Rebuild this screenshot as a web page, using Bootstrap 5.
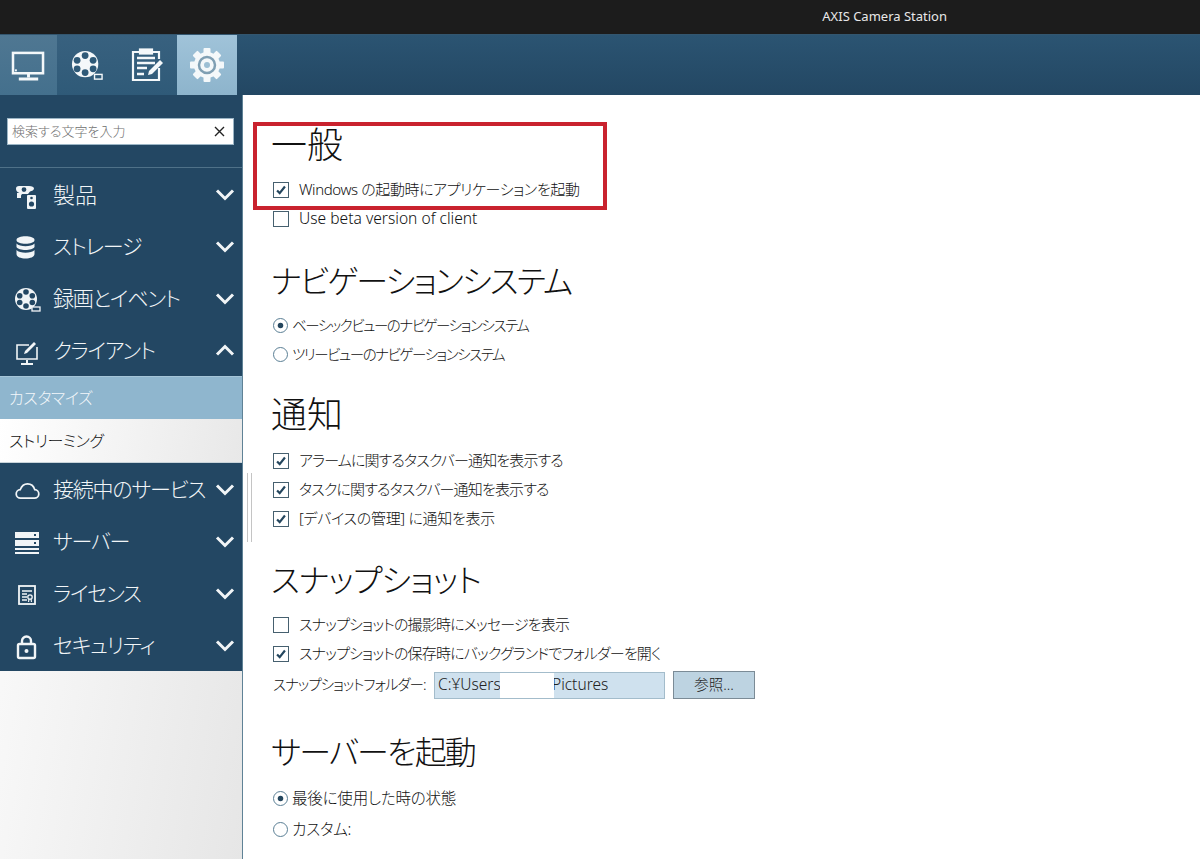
<!DOCTYPE html>
<html lang="ja">
<head>
    <meta charset="UTF-8">
    <meta name="viewport" content="width=device-width, initial-scale=1.0">
    <title>AXIS Camera Station</title>
    <link href="https://cdn.jsdelivr.net/npm/bootstrap@5.3.0/dist/css/bootstrap.min.css" rel="stylesheet">
    <script src="https://cdn.jsdelivr.net/npm/bootstrap@5.3.0/dist/js/bootstrap.bundle.min.js"></script>
    <style>
        html, body { height: 100%; }
        body {
            background: #fff;
            color: #111;
            font-family: "Noto Sans", "Noto Sans CJK JP", sans-serif;
            font-feature-settings: "palt";
            overflow: hidden;
        }
        /* title bar */
        .title-bar { height: 34px; background: #1c1c1c; color: #e8e8e8; font-size: 13px; padding-right: 253px; }
        /* tool bar */
        .tool-bar { height: 61px; background: linear-gradient(#2b5472, #234763); border-top: 1px solid #33566f; }
        .tool-tab { width: 60px; }
        .tool-tab.home { width: 57px; background: linear-gradient(#4f7792, #44708d); }
        .tool-tab.dim { background: linear-gradient(#38617f, #2f5a78); }
        .tool-tab.active { background: linear-gradient(#a0c3d9, #8db4cc); }
        /* sidebar */
        .app-body { height: 764px; }
        .side { width: 243px; background: linear-gradient(100deg, #fff, #e6e6e6); border-right: 1px solid #5f8296; }
        .search-box { height: 73px; background: #234763; padding: 23px 8px 0 7px; border-bottom: 1px solid #4f7188; }
        .search-box .inner { height: 27px; background: #fff; border: 1px solid #9cb6c6; padding: 0 8px 0 4px; font-size: 13px; font-weight: 300; color: #6e6e6e; }
        .search-box svg { width: 11px; height: 11px; }
        .menu-item { height: 52px; background: #234763; color: #f1f5f7; font-size: 21px; font-weight: 300; letter-spacing: -1.2px; }
        .menu-item.kanji { font-size: 22px; letter-spacing: 0; }
        .menu-item .ico { width: 53px; padding-left: 15px; flex: none; }
        .menu-item .lbl { line-height: 1; white-space: nowrap; }
        .menu-item .chev { width: 20px; height: 13px; margin: 0 7px 0 auto; flex: none; }
        .sub-item { height: 43px; font-size: 16px; padding-left: 9px; font-weight: 300; letter-spacing: -.4px; }
        .sub-item.on { background: #8fb6ce; color: #f3f7fa; border-top: 1px solid #a5c5d8; height: 43px; }
        .sub-item.off { height: 44px; background: linear-gradient(100deg, #fff, #e8e8e8); color: #111; border-bottom: 1px solid #c9d4da; }
        /* splitter */
        .splitter { width: 5px; height: 69px; margin: 378px 0 0 4px; border-left: 1px solid #c4c4c4; border-right: 1px solid #c4c4c4; flex: none; }
        /* main form */
        .content { padding: 30px 0 0 19px; position: relative; }
        .content h2 { font-size: 32px; line-height: 40px; font-weight: 300; letter-spacing: -1.8px; margin: 0 0 10px; }
        .content h2.kanji { font-size: 36px; letter-spacing: 0; }
        .content section { margin-bottom: 28px; }
        .content section.sec-nav { margin-bottom: 26px; }
        .content section.sec-notify { margin-bottom: 27px; }
        .content section.sec-notify h2 { margin-bottom: 11px; }
        .content section.sec-snap { margin-bottom: 33px; }
        .content section.sec-snap h2 { letter-spacing: -.9px; }
        .content section.sec-server h2 { margin-bottom: 12px; }
        .opt { height: 29px; font-size: 15px; font-weight: 300; letter-spacing: -.85px; margin: 0; padding: 0; min-height: 0; white-space: nowrap; }
        .opt.first { letter-spacing: -.4px; }
        .opt.wide { letter-spacing: -.3px; }
        .opt.tight { font-size: 14.5px; letter-spacing: -1.45px; }
        .opt.plain { font-size: 15.5px; letter-spacing: -.2px; }
        .opt.latin { font-size: 15.6px; letter-spacing: 0; }
        .opt.gap-after { margin-bottom: 2px; }
        .opt .form-check-input { margin: 0 10px 0 2px; float: none; flex: none; width: 16px; height: 16px; border: 1px solid #46606f; border-radius: 0; box-shadow: none; }
        .opt .form-check-input[type=checkbox]:checked {
            background-color: #fff; border-color: #46606f;
            background-image: url("data:image/svg+xml,%3csvg xmlns='http://www.w3.org/2000/svg' viewBox='0 0 16 16'%3e%3cpath fill='none' stroke='%2324465e' stroke-width='2.5' d='M3.5 8.5l3 3 6-7.500'/%3e%3c/svg%3e");
            background-size: 100% 100%;
        }
        .opt .form-check-input[type=radio] { border-radius: 50%; width: 15px; height: 15px; margin-right: 4px; border-color: #5b7f95; opacity: 1; }
        .opt .form-check-input[type=radio]:checked {
            background-color: #fff; border-color: #5b7f95;
            background-image: url("data:image/svg+xml,%3csvg xmlns='http://www.w3.org/2000/svg' viewBox='0 0 16 16'%3e%3ccircle cx='8' cy='8' r='3.4' fill='%2324465e'/%3e%3c/svg%3e");
            background-size: 100% 100%;
        }
        .folder-row { height: 28px; margin-top: 3px; font-size: 14.5px; font-weight: 300; }
        .folder-label { width: 163px; padding-left: 2px; white-space: nowrap; letter-spacing: -1px; }
        .folder-input { width: 231px; height: 27px; background: #cfe1ee; border: 1px solid #a3bccb; padding: 0 0 1px 3px; font-size: 15.5px; color: #222; position: relative; }
        .folder-mask { position: absolute; left: 65px; top: 0; width: 54px; height: 25px; background: #fff; }
        .folder-text { width: 62px; overflow: hidden; white-space: nowrap; display: inline-block; }
        .folder-rest { margin-left: 52px; }
        .btn-browse { width: 82px; height: 28px; margin-left: 8px; padding: 0; font-size: 14.5px; font-weight: 300; color: #222; background: #bdd3e1; border: 1px solid #7b8b96; border-radius: 0; }
        /* red highlight drawn over the screenshot */
        .red-mark { position: absolute; left: 1px; top: 27px; width: 354px; height: 88px; border: 4px solid #c9222e; pointer-events: none; }
    </style>
</head>
<body>
    <div class="title-bar d-flex align-items-center justify-content-end">AXIS Camera Station</div>

    <div class="tool-bar d-flex">
        <div class="tool-tab home d-flex align-items-center justify-content-center">
            <svg width="35" height="31" viewBox="0 0 36 32" fill="none" stroke="#f4f8fa" stroke-width="2.6"><rect x="2" y="3" width="31" height="21"/><path d="M18 24v4M8 30h20" stroke-width="3"/><rect x="4" y="20" width="2" height="2" fill="#f4f8fa" stroke="none"/></svg>
        </div>
        <div class="tool-tab dim d-flex align-items-center justify-content-center">
            <svg width="32" height="32" viewBox="0 0 34 34"><circle cx="15" cy="16" r="14" fill="#f4f8fa"/><g fill="#2f5a78"><circle cx="15" cy="7" r="3.6"/><circle cx="15" cy="25" r="3.6"/><circle cx="6.5" cy="12" r="3.6"/><circle cx="23.5" cy="12" r="3.6"/><circle cx="6.5" cy="21" r="3.6"/><circle cx="23.5" cy="21" r="3.6"/></g><rect x="25" y="27" width="8" height="5" fill="#2f5a78" stroke="#f4f8fa" stroke-width="1.5"/></svg>
        </div>
        <div class="tool-tab dim d-flex align-items-center justify-content-center">
            <svg width="32" height="34" viewBox="0 0 32 34" fill="none" stroke="#f4f8fa" stroke-width="2.2"><path d="M9 4H2v28h26V20M21 4h7v7"/><rect x="9" y="1.5" width="12" height="4" fill="#f4f8fa"/><path d="M6 10h18M6 15h18M6 20h10M6 26h7" stroke-width="2.4"/><path d="M17 27l1-4 11-11 3 3-11 11z" fill="#f4f8fa" stroke="none"/></svg>
        </div>
        <div class="tool-tab active d-flex align-items-center justify-content-center">
            <svg width="36" height="36" viewBox="0 0 36 36">
                <g fill="#f4f8fa">
                    <rect x="14.500" y="1" width="7" height="34" rx="1"/>
                    <rect x="14.500" y="1" width="7" height="34" rx="1" transform="rotate(45 18 18)"/>
                    <rect x="14.500" y="1" width="7" height="34" rx="1" transform="rotate(90 18 18)"/>
                    <rect x="14.500" y="1" width="7" height="34" rx="1" transform="rotate(135 18 18)"/>
                    <circle cx="18" cy="18" r="13"/>
                </g>
                <circle cx="18" cy="18" r="8" fill="none" stroke="#7f9fb3" stroke-width="2.500"/>
                <circle cx="18" cy="18" r="5.500" fill="#f4f8fa"/>
                <circle cx="18" cy="18" r="3" fill="#9dbfd4"/>
            </svg>
        </div>
    </div>

    <div class="app-body d-flex">
        <aside class="side flex-shrink-0">
            <div class="search-box">
                <div class="inner d-flex align-items-center justify-content-between">
                    <span>検索する文字を入力</span>
                    <svg viewBox="0 0 11 11" stroke="#222" stroke-width="1.400"><path d="M1 1l9 9M10 1l-9 9"/></svg>
                </div>
            </div>

            <div class="menu-item kanji d-flex align-items-center">
                <div class="ico"><svg width="22" height="24" viewBox="0 0 22 24"><path fill="#f1f5f7" fill-rule="evenodd" d="M4 1h10c3 0 5 1 5 2.500S17 6 15 6.500L13 9H7L6 10.500V13H2V8h2.500C2 7 1 5.500 1 3.500 1 2 2 1 4 1zM9 2.200a2.400 2.400 0 1 0 0 4.800 2.400 2.400 0 0 0 0-4.800z"/><rect x="12" y="10" width="9" height="14" rx="1" fill="#f1f5f7"/><circle cx="16.500" cy="19" r="2.600" fill="#234763"/><circle cx="16.500" cy="13" r="1.300" fill="#234763"/></svg></div>
                <span class="lbl">製品</span>
                <svg class="chev" viewBox="0 0 20 13" fill="none" stroke="#f1f5f7" stroke-width="3"><path d="M2 2.500l8 8 8-8"/></svg>
            </div>
            <div class="menu-item d-flex align-items-center">
                <div class="ico"><svg width="21" height="25" viewBox="3 0 18 25" fill="#f1f5f7"><path d="M3 5c0-5 18-5 18 0s-18 5-18 0z"/><path d="M3 8.500c3 3.500 15 3.500 18 0V12c-2 4-16 4-18 0z"/><path d="M3 15c3 3.500 15 3.500 18 0v4c0 6-18 6-18 0z"/></svg></div>
                <span class="lbl">ストレージ</span>
                <svg class="chev" viewBox="0 0 20 13" fill="none" stroke="#f1f5f7" stroke-width="3"><path d="M2 2.500l8 8 8-8"/></svg>
            </div>
            <div class="menu-item d-flex align-items-center">
                <div class="ico"><svg width="26" height="26" viewBox="0 0 26 26"><circle cx="11" cy="12" r="11" fill="#f1f5f7"/><g fill="#234763"><circle cx="11" cy="5" r="2.800"/><circle cx="11" cy="19" r="2.800"/><circle cx="4.700" cy="8.700" r="2.800"/><circle cx="17.300" cy="8.700" r="2.800"/><circle cx="4.700" cy="15.500" r="2.800"/><circle cx="17.300" cy="15.500" r="2.800"/></g><rect x="17" y="20" width="8" height="4" fill="#234763" stroke="#f1f5f7" stroke-width="1.300"/></svg></div>
                <span class="lbl">録画とイベント</span>
                <svg class="chev" viewBox="0 0 20 13" fill="none" stroke="#f1f5f7" stroke-width="3"><path d="M2 2.500l8 8 8-8"/></svg>
            </div>
            <div class="menu-item d-flex align-items-center">
                <div class="ico"><svg width="24" height="26" viewBox="0 0 24 26" fill="none" stroke="#f1f5f7" stroke-width="1.600"><path d="M14 6H2v14h20V8"/><path d="M12 21v3M6 25h12" stroke-width="2"/><path d="M9 15l1-3 9-9 2 2-9 9z" fill="#f1f5f7" stroke="none"/></svg></div>
                <span class="lbl">クライアント</span>
                <svg class="chev" viewBox="0 0 20 13" fill="none" stroke="#f1f5f7" stroke-width="3"><path d="M2 10.500l8-8 8 8"/></svg>
            </div>
            <div class="sub-item on d-flex align-items-center">カスタマイズ</div>
            <div class="sub-item off d-flex align-items-center">ストリーミング</div>
            <div class="menu-item d-flex align-items-center">
                <div class="ico"><svg width="25" height="18" viewBox="0 0 26 18" fill="none" stroke="#f1f5f7" stroke-width="1.800"><path d="M6 16.500a4.500 4.500 0 0 1-.5-9C7 3.500 10 1.500 13 1.500c4 0 6.500 2.500 7.500 6a4.500 4.500 0 0 1-.5 9z"/></svg></div>
                <span class="lbl">接続中のサービス</span>
                <svg class="chev" viewBox="0 0 20 13" fill="none" stroke="#f1f5f7" stroke-width="3"><path d="M2 2.500l8 8 8-8"/></svg>
            </div>
            <div class="menu-item d-flex align-items-center">
                <div class="ico"><svg width="24" height="22" viewBox="0 0 24 22"><path fill="#f1f5f7" d="M0 0h24v6H0zM0 8h24v6H0zM0 16h24v2H0zM0 20h24v2H0z"/><path fill="#234763" d="M19 2h2v2h-2zM19 10h2v2h-2z"/></svg></div>
                <span class="lbl">サーバー</span>
                <svg class="chev" viewBox="0 0 20 13" fill="none" stroke="#f1f5f7" stroke-width="3"><path d="M2 2.500l8 8 8-8"/></svg>
            </div>
            <div class="menu-item d-flex align-items-center">
                <div class="ico"><svg width="24" height="22" viewBox="0 0 24 22" fill="none" stroke="#f1f5f7"><rect x="4" y="2" width="16" height="18" stroke-width="1.800"/><path d="M7 7h10M7 10h5M7 13h5M7 16h5" stroke-width="1.300"/><circle cx="15" cy="13" r="2.200" stroke-width="1.300"/><path d="M14 15l-.5 3M16 15l.5 3" stroke-width="1.200"/></svg></div>
                <span class="lbl">ライセンス</span>
                <svg class="chev" viewBox="0 0 20 13" fill="none" stroke="#f1f5f7" stroke-width="3"><path d="M2 2.500l8 8 8-8"/></svg>
            </div>
            <div class="menu-item d-flex align-items-center">
                <div class="ico"><svg width="24" height="26" viewBox="0 0 24 26" fill="none" stroke="#f1f5f7" stroke-width="2.400"><rect x="3" y="10" width="17" height="14" rx="1.500"/><path d="M7 10V7a4.500 4.500 0 0 1 9 0v3"/><circle cx="11.500" cy="17" r="2" fill="#f1f5f7" stroke="none"/></svg></div>
                <span class="lbl">セキュリティ</span>
                <svg class="chev" viewBox="0 0 20 13" fill="none" stroke="#f1f5f7" stroke-width="3"><path d="M2 2.500l8 8 8-8"/></svg>
            </div>
        </aside>

        <div class="splitter"></div>

        <main class="content flex-grow-1">
            <section>
                <h2 class="kanji">一般</h2>
                <label class="opt first form-check d-flex align-items-center"><input class="form-check-input" type="checkbox" checked>Windows の起動時にアプリケーションを起動</label>
                <label class="opt latin form-check d-flex align-items-center"><input class="form-check-input" type="checkbox">Use beta version of client</label>
            </section>
            <section class="sec-nav">
                <h2>ナビゲーションシステム</h2>
                <label class="opt tight form-check d-flex align-items-center"><input class="form-check-input" type="radio" name="nav" checked>ベーシックビューのナビゲーションシステム</label>
                <label class="opt tight form-check d-flex align-items-center"><input class="form-check-input" type="radio" name="nav">ツリービューのナビゲーションシステム</label>
            </section>
            <section class="sec-notify">
                <h2 class="kanji">通知</h2>
                <label class="opt form-check d-flex align-items-center"><input class="form-check-input" type="checkbox" checked>アラームに関するタスクバー通知を表示する</label>
                <label class="opt form-check d-flex align-items-center"><input class="form-check-input" type="checkbox" checked>タスクに関するタスクバー通知を表示する</label>
                <label class="opt wide form-check d-flex align-items-center"><input class="form-check-input" type="checkbox" checked>[デバイスの管理] に通知を表示</label>
            </section>
            <section class="sec-snap">
                <h2>スナップショット</h2>
                <label class="opt form-check d-flex align-items-center"><input class="form-check-input" type="checkbox">スナップショットの撮影時にメッセージを表示</label>
                <label class="opt form-check d-flex align-items-center"><input class="form-check-input" type="checkbox" checked>スナップショットの保存時にバックグランドでフォルダーを開く</label>
                <div class="folder-row d-flex align-items-center">
                    <span class="folder-label">スナップショットフォルダー:</span>
                    <div class="folder-input d-flex align-items-center">
                        <span class="folder-text">C:¥Users</span><span class="folder-rest">Pictures</span>
                        <span class="folder-mask"></span>
                    </div>
                    <button type="button" class="btn btn-browse">参照...</button>
                </div>
            </section>
            <section class="sec-server">
                <h2>サーバーを起動</h2>
                <label class="opt plain gap-after form-check d-flex align-items-center"><input class="form-check-input" type="radio" name="srv" checked>最後に使用した時の状態</label>
                <label class="opt plain form-check d-flex align-items-center"><input class="form-check-input" type="radio" name="srv">カスタム:</label>
            </section>
            <div class="red-mark"></div>
        </main>
    </div>
</body>
</html>
